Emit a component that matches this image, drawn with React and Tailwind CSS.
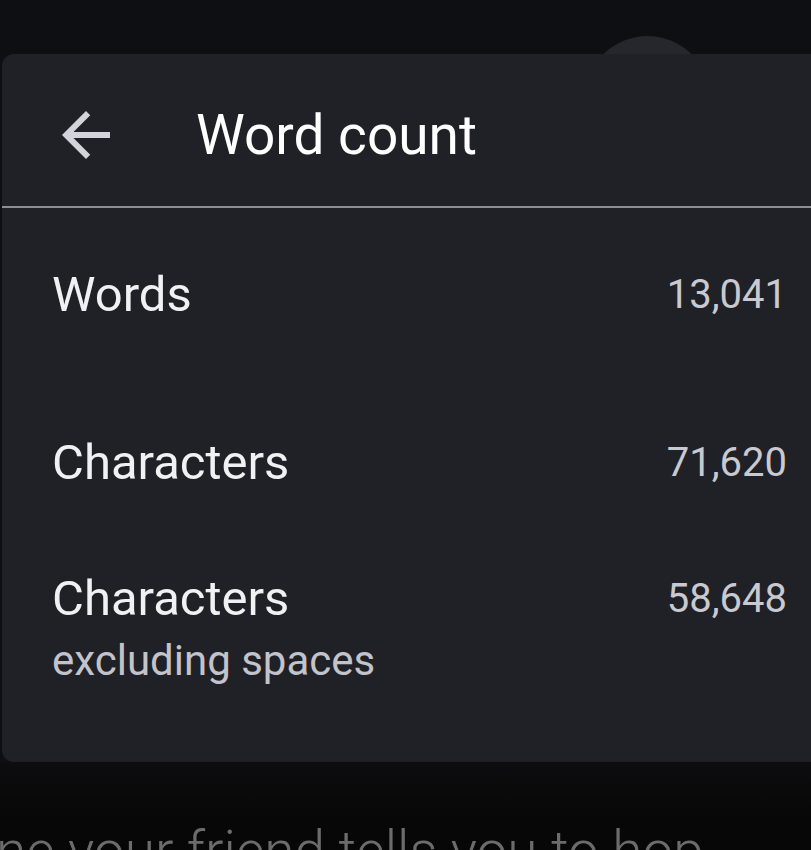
import React from "react";

const ArrowBack = () => (
  <svg width="72" height="72" viewBox="0 0 24 24" fill="#d3d3db">
    <path d="M20 11H7.83l5.59-5.59L12 4l-8 8 8 8 1.41-1.41L7.83 13H20v-2z" />
  </svg>
);

const Row = ({ label, sub, value, className }) => (
  <div className={`flex justify-between items-start pl-[50px] pr-[24px] ${className}`}>
    <div className="flex flex-col">
      <span className="text-[49px] leading-[56px] text-[#f1f1f4]">{label}</span>
      {sub && <span className="text-[42px] leading-[56px] mt-[6px] text-[#c3c3cb]">{sub}</span>}
    </div>
    <span className="text-[40px] leading-[56px] text-[#c9c9d1]">{value}</span>
  </div>
);

export default function App() {
  return (
    <div
      className="relative w-[811px] h-[850px] overflow-hidden bg-[#0e0f12]"
      style={{ fontFamily: "Roboto, 'Noto Sans', sans-serif" }}
    >
      {/* button behind the sheet */}
      <div className="absolute left-[585px] top-[36px] w-[125px] h-[125px] rounded-full bg-[#25272d]" />

      <div className="relative ml-[2px] mt-[54px] h-[708px] bg-[#202126] rounded-l-[12px] flex flex-col">
        {/* header */}
        <div className="flex items-center h-[152px] pl-[48px] pt-[10px]">
          <ArrowBack />
          <span className="ml-[74px] text-[55px] text-white">Word count</span>
        </div>
        <div className="h-[2px] bg-[#8d8d93]" />

        <Row label="Words" value="13,041" className="mt-[59px]" />
        <Row label="Characters" value="71,620" className="mt-[112px]" />
        <Row label="Characters" sub="excluding spaces" value="58,648" className="mt-[80px]" />
      </div>

      <div className="h-[62px] bg-gradient-to-b from-[#0d0d0f] to-[#070707]" />
      <div className="bg-[#070707] -ml-[4px] text-[55px] leading-[55px] font-light text-[#6c6c6c] whitespace-nowrap">
        ne your friend tells you to hop
      </div>
    </div>
  );
}
